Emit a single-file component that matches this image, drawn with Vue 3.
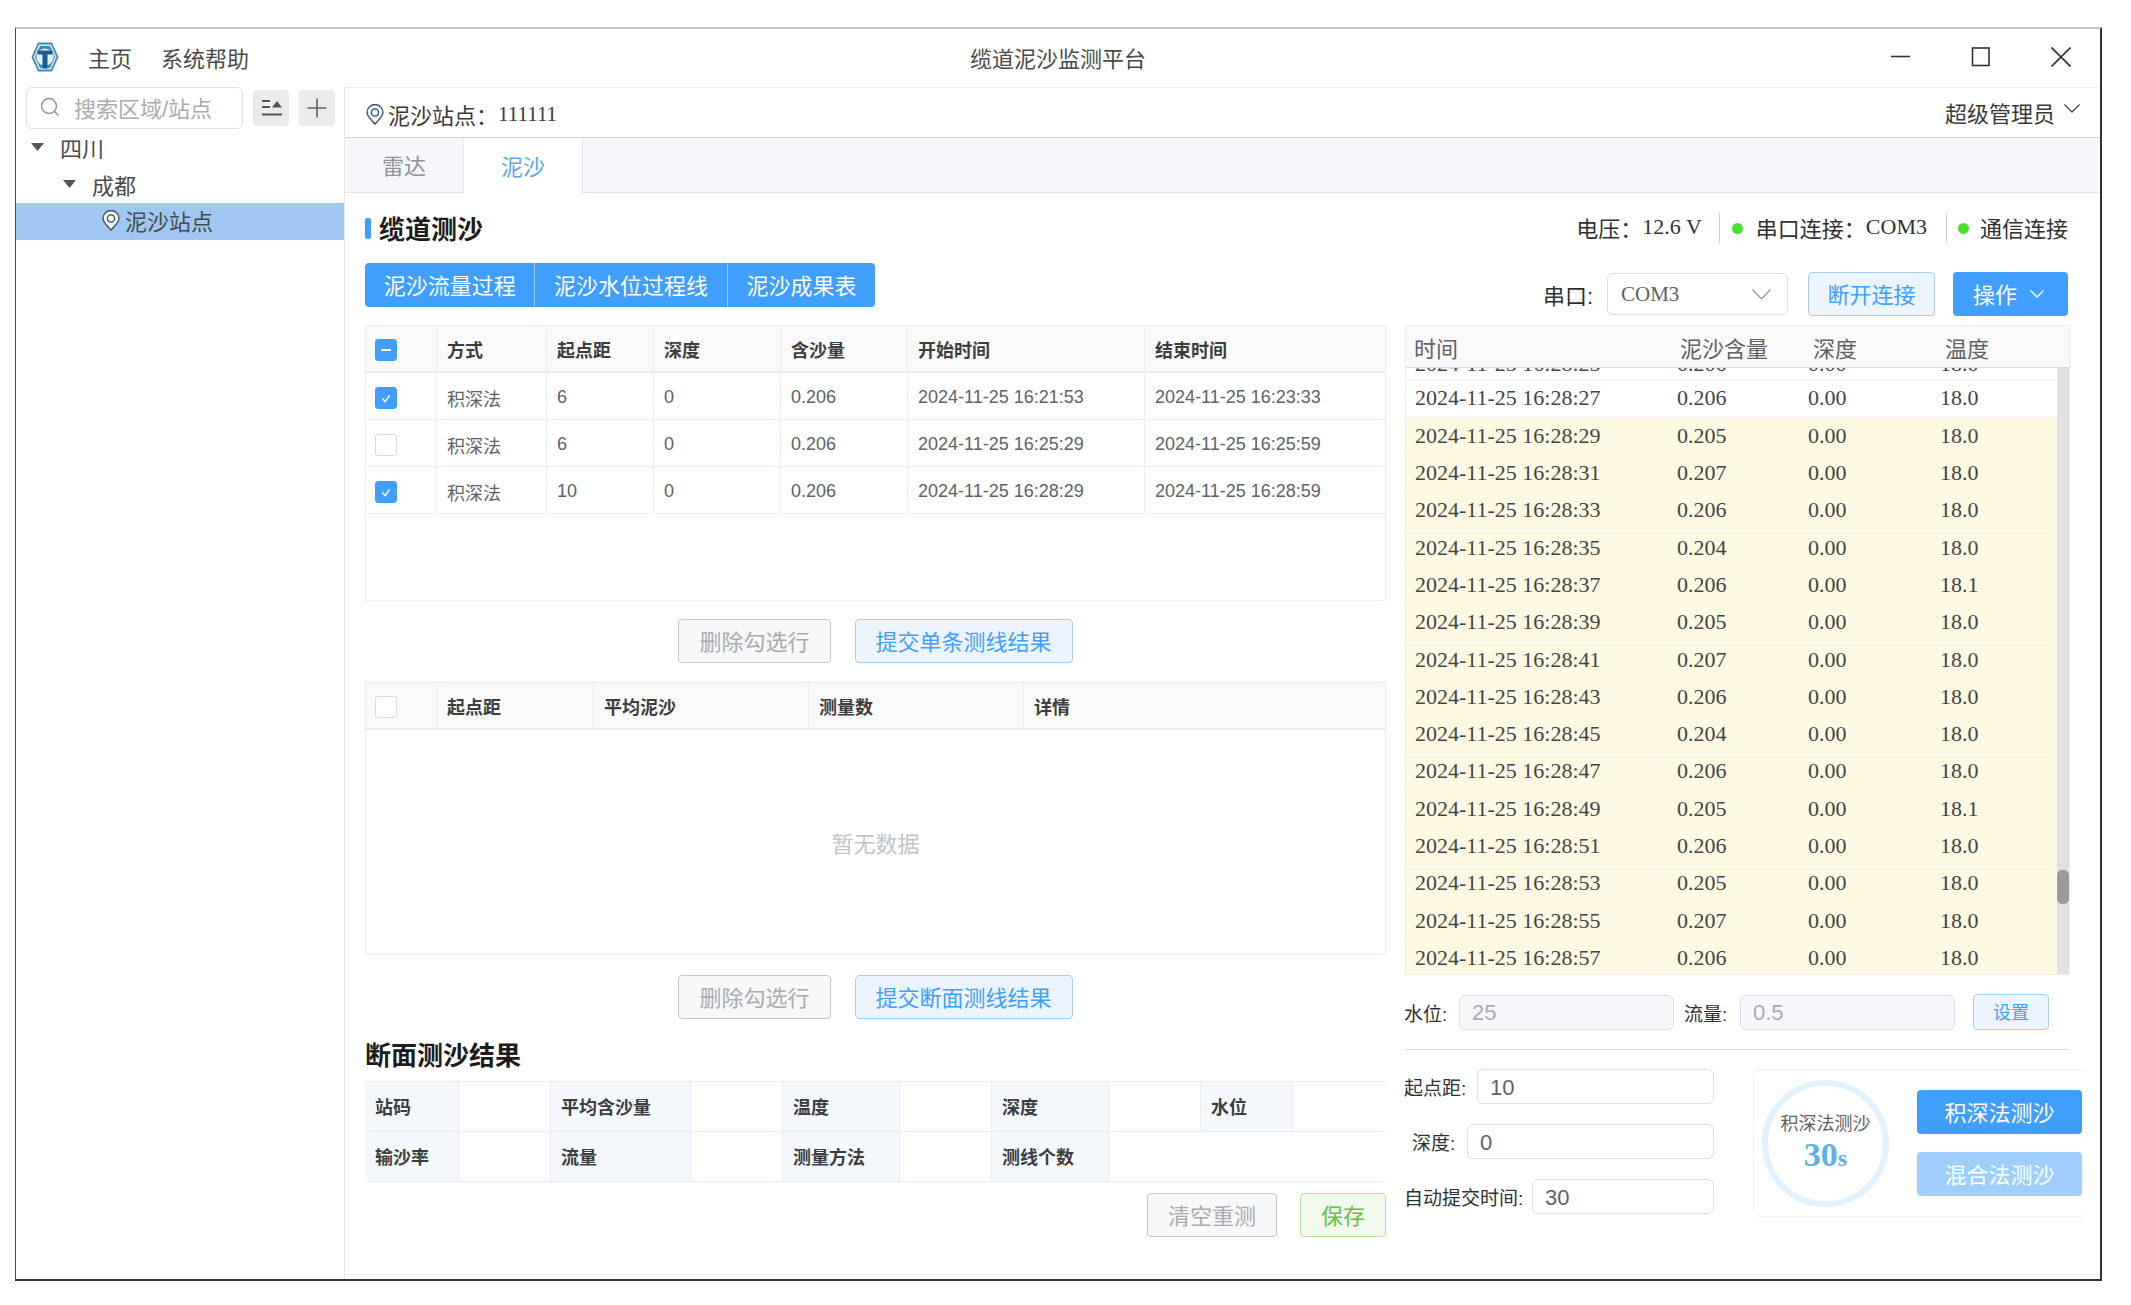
<template>
  <div class="page">
    <div class="window">
      <!-- 标题栏 -->
      <header class="titlebar">
        <div class="title-left">
          <svg class="logo" viewBox="0 0 28 30">
            <polygon points="7,0.5 21,0.5 27.5,15 21,29.5 7,29.5 0.5,15" fill="#3f8db3" />
            <polygon points="8,2.5 20,2.5 25.5,15 20,27.5 8,27.5 2.5,15" fill="#d5e8f0" />
            <polygon points="9,4 19,4 24,15 19,26 9,26 4,15" fill="#3f8db3" />
            <circle cx="14" cy="15" r="8.6" fill="#e6f1f6" />
            <path d="M6.5 8.5h15v4h-5v14h-5v-14h-5z" fill="#1c5c8e" />
          </svg>
          <span class="menu">主页</span>
          <span class="menu">系统帮助</span>
        </div>
        <div class="title-center">缆道泥沙监测平台</div>
        <div class="title-right">
          <svg viewBox="0 0 20 20" class="win-btn"><path d="M0 9.5h19" /></svg>
          <svg viewBox="0 0 20 20" class="win-btn"><rect x="1.5" y="1" width="16.5" height="17.5" /></svg>
          <svg viewBox="0 0 20 20" class="win-btn"><path d="M0.5 0.5l19 19M19.5 0.5l-19 19" /></svg>
        </div>
      </header>

      <div class="body">
        <!-- 左侧树 -->
        <aside class="sidebar">
          <div class="search-row">
            <div class="search">
              <svg viewBox="0 0 20 20" class="search-icon">
                <circle cx="9" cy="9" r="7.5" />
                <path d="M14.5 14.5l4 4" />
              </svg>
              <span>搜索区域/站点</span>
            </div>
            <button class="icon-btn">
              <svg viewBox="0 0 36 36" width="36" height="36">
                <path d="M9 11h8M9 17h8M9 24.5h20" stroke="#555" stroke-width="2" />
                <polygon points="19,17.5 29,17.5 24,11" fill="#555" />
              </svg>
            </button>
            <button class="icon-btn">
              <svg viewBox="0 0 36 36" width="36" height="36">
                <path d="M18 8.5v19M8.5 18h19" stroke="#606266" stroke-width="1.6" />
              </svg>
            </button>
          </div>
          <div class="tree">
            <div class="tree-row">
              <svg class="caret" viewBox="0 0 13 8"><polygon points="0,0 13,0 6.5,8" /></svg>
              <span>四川</span>
            </div>
            <div class="tree-row level2">
              <svg class="caret" viewBox="0 0 13 8"><polygon points="0,0 13,0 6.5,8" /></svg>
              <span>成都</span>
            </div>
            <div class="tree-row level3 selected">
              <svg class="pin" viewBox="0 0 18 21">
                <path d="M9 20C4.5 15.500 1 11.800 1 8.500a8 8 0 0 1 16 0c0 3.300-3.500 7-8 11.500z" />
                <circle cx="9" cy="8.500" r="3.600" />
              </svg>
              <span>泥沙站点</span>
            </div>
          </div>
        </aside>

        <main class="main">
          <div class="main-header">
            <div class="station">
              <svg class="pin" viewBox="0 0 18 21">
                <path d="M9 20C4.5 15.500 1 11.800 1 8.500a8 8 0 0 1 16 0c0 3.300-3.500 7-8 11.500z" />
                <circle cx="9" cy="8.500" r="3.600" />
              </svg>
              <span>泥沙站点：</span><span class="serif station-no">111111</span>
            </div>
            <div class="user">
              <span>超级管理员</span>
              <svg class="chev" viewBox="0 0 16 9"><path d="M0.500 0.500L8 8l7.500-7.500" /></svg>
            </div>
          </div>

          <div class="tabs">
            <div class="tab">雷达</div>
            <div class="tab active">泥沙</div>
          </div>

          <div class="content">
            <div class="head-row">
              <h2 class="section-title"><i class="title-bar"></i>缆道测沙</h2>
              <div class="status">
                <span>电压：</span><span class="serif">12.6 V</span>
                <i class="sep first-sep"></i>
                <i class="dot"></i>
                <span>串口连接：</span><span class="serif">COM3</span>
                <i class="sep"></i>
                <i class="dot last-dot"></i>
                <span>通信连接</span>
              </div>
            </div>

            <div class="toolbar">
              <div class="btn-group">
                <button v-for="b in groupBtns" :key="b">{{ b }}</button>
              </div>
              <div class="serial">
                <span class="serial-label">串口:</span>
                <div class="select">
                  <span class="serif">COM3</span>
                  <svg class="select-chev" viewBox="0 0 19 11"><path d="M0.500 0.500L9.500 10l9-9.500" /></svg>
                </div>
                <button class="btn light">断开连接</button>
                <button class="btn primary op-btn">
                  操作
                  <svg viewBox="0 0 14 8"><path d="M0.500 0.500L7 7l6.500-6.500" /></svg>
                </button>
              </div>
            </div>

            <div class="columns">
              <section class="col-left">
                <div class="table-box first-table">
                  <table>
                    <colgroup>
                      <col class="c-check" /><col class="c-a" /><col class="c-b" />
                      <col class="c-c" /><col class="c-c" /><col class="c-d" /><col />
                    </colgroup>
                    <thead>
                      <tr>
                        <th><span class="check on"><i class="dash"></i></span></th>
                        <th>方式</th><th>起点距</th><th>深度</th><th>含沙量</th><th>开始时间</th><th>结束时间</th>
                      </tr>
                    </thead>
                    <tbody>
                      <tr v-for="r in lines" :key="r.start">
                        <td>
                          <span class="check" :class="{ on: r.checked }">
                            <svg v-if="r.checked" viewBox="0 0 22 22"><path d="M7 11.500l3 3.500 5-7" /></svg>
                          </span>
                        </td>
                        <td>积深法</td>
                        <td>{{ r.dist }}</td>
                        <td>0</td>
                        <td>0.206</td>
                        <td>{{ r.start }}</td>
                        <td>{{ r.end }}</td>
                      </tr>
                    </tbody>
                  </table>
                </div>

                <div class="actions">
                  <button class="btn plain">删除勾选行</button>
                  <button class="btn light">提交单条测线结果</button>
                </div>

                <div class="table-box second-table">
                  <table>
                    <colgroup>
                      <col class="c-check" /><col class="c-e" /><col class="c-f" /><col class="c-f" /><col />
                    </colgroup>
                    <thead>
                      <tr>
                        <th><span class="check"></span></th>
                        <th>起点距</th><th>平均泥沙</th><th>测量数</th><th>详情</th>
                      </tr>
                    </thead>
                  </table>
                  <div class="empty">暂无数据</div>
                </div>

                <div class="actions second-actions">
                  <button class="btn plain">删除勾选行</button>
                  <button class="btn light">提交断面测线结果</button>
                </div>

                <h3 class="result-title">断面测沙结果</h3>
                <div class="desc">
                  <span class="lb w1">站码</span><span class="w2"></span>
                  <span class="lb w3">平均含沙量</span><span class="w4"></span>
                  <span class="lb w5">温度</span><span class="w6"></span>
                  <span class="lb w5">深度</span><span class="w6"></span>
                  <span class="lb w7">水位</span><span class="w8"></span>
                  <span class="lb w1">输沙率</span><span class="w2"></span>
                  <span class="lb w3">流量</span><span class="w4"></span>
                  <span class="lb w5">测量方法</span><span class="w6"></span>
                  <span class="lb w5">测线个数</span><span class="w9"></span>
                </div>
                <div class="result-actions">
                  <button class="btn plain">清空重测</button>
                  <button class="btn green">保存</button>
                </div>
              </section>

              <section class="col-right">
                <div class="live">
                  <div class="live-head">
                    <span>时间</span><span>泥沙含量</span><span>深度</span><span>温度</span>
                  </div>
                  <div class="live-body">
                    <div class="live-rows">
                      <div
                        v-for="(r, i) in samples"
                        :key="r.t"
                        class="live-row"
                        :class="{ warn: i > 1, cut: i === 0 }"
                      >
                        <span>2024-11-25 16:28:{{ r.t }}</span>
                        <span>{{ r.v }}</span>
                        <span>0.00</span>
                        <span>{{ r.temp }}</span>
                      </div>
                    </div>
                    <div class="scroll-track">
                      <div class="scroll-thumb"></div>
                    </div>
                  </div>
                </div>

                <div class="water-row">
                  <label class="f-label">水位:</label>
                  <input class="input" value="25" disabled />
                  <label class="f-label">流量:</label>
                  <input class="input" value="0.5" disabled />
                  <button class="btn light small">设置</button>
                </div>

                <div class="divider"></div>

                <div class="measure">
                  <div class="form">
                    <div class="form-row">
                      <label class="l1">起点距:</label>
                      <input class="input" value="10" />
                    </div>
                    <div class="form-row">
                      <label class="l2">深度:</label>
                      <input class="input" value="0" />
                    </div>
                    <div class="form-row">
                      <label class="l3">自动提交时间:</label>
                      <input class="input" value="30" />
                    </div>
                  </div>
                  <div class="timer-card">
                    <div class="ring">
                      <span class="ring-name">积深法测沙</span>
                      <span class="ring-num serif">30<small>s</small></span>
                    </div>
                    <div class="timer-btns">
                      <button class="btn primary wide">积深法测沙</button>
                      <button class="btn primary wide off">混合法测沙</button>
                    </div>
                  </div>
                </div>
              </section>
            </div>
          </div>
        </main>
      </div>
    </div>
  </div>
</template>

<script setup>
const groupBtns = ['泥沙流量过程', '泥沙水位过程线', '泥沙成果表']

const lines = [
  { dist: 6, start: '2024-11-25 16:21:53', end: '2024-11-25 16:23:33', checked: true },
  { dist: 6, start: '2024-11-25 16:25:29', end: '2024-11-25 16:25:59', checked: false },
  { dist: 10, start: '2024-11-25 16:28:29', end: '2024-11-25 16:28:59', checked: true }
]

// 第一行是滚动时露出一半的行
const samples = [
  { t: '25', v: '0.206', temp: '18.0' },
  { t: '27', v: '0.206', temp: '18.0' },
  { t: '29', v: '0.205', temp: '18.0' },
  { t: '31', v: '0.207', temp: '18.0' },
  { t: '33', v: '0.206', temp: '18.0' },
  { t: '35', v: '0.204', temp: '18.0' },
  { t: '37', v: '0.206', temp: '18.1' },
  { t: '39', v: '0.205', temp: '18.0' },
  { t: '41', v: '0.207', temp: '18.0' },
  { t: '43', v: '0.206', temp: '18.0' },
  { t: '45', v: '0.204', temp: '18.0' },
  { t: '47', v: '0.206', temp: '18.0' },
  { t: '49', v: '0.205', temp: '18.1' },
  { t: '51', v: '0.206', temp: '18.0' },
  { t: '53', v: '0.205', temp: '18.0' },
  { t: '55', v: '0.207', temp: '18.0' },
  { t: '57', v: '0.206', temp: '18.0' }
]
</script>

<style>
html,
body {
  margin: 0;
  background: #fff;
}
</style>

<style scoped>
.page {
  width: 2131px;
  height: 1305px;
  padding: 27px 0 0 15px;
  box-sizing: border-box;
  overflow: hidden;
  background: #fff;
  font-family: 'Liberation Sans', 'Noto Sans CJK SC', sans-serif;
  color: #303133;
}

.serif {
  font-family: 'Liberation Serif', 'Noto Sans CJK SC', serif;
}

.window {
  width: 2087px;
  height: 1254px;
  box-sizing: border-box;
  display: flex;
  flex-direction: column;
  border: 2px solid #333;
  border-left-width: 1px;
  border-left-color: #4a4a4a;
  border-top-color: #c6c6c0;
}

/* 标题栏 */
.titlebar {
  height: 58px;
  flex-shrink: 0;
  box-sizing: border-box;
  padding-bottom: 3px;
  display: grid;
  grid-template-columns: 1fr auto 1fr;
  align-items: center;
  font-size: 22px;
  color: #4a4a4a;
}

.title-left {
  display: flex;
  align-items: center;
  padding-left: 15px;
}

.logo {
  width: 28px;
  height: 30px;
}

.menu {
  margin-left: 29px;
}

.title-right {
  display: flex;
  justify-content: flex-end;
  gap: 60px;
  padding-right: 29px;
}

.win-btn {
  width: 20px;
  height: 20px;
  fill: none;
  stroke: #333;
  stroke-width: 1.6;
}

.body {
  flex: 1;
  display: flex;
  min-height: 0;
}

/* 左侧 */
.sidebar {
  width: 329px;
  flex-shrink: 0;
  box-sizing: border-box;
  border-right: 1px solid #e8e8e8;
}

.search-row {
  display: flex;
  align-items: center;
  gap: 10px;
  padding-left: 10px;
}

.search {
  width: 217px;
  height: 42px;
  box-sizing: border-box;
  display: flex;
  align-items: center;
  gap: 14px;
  padding: 0 0 2px 13px;
  border: 1px solid #dcdfe6;
  border-radius: 6px;
  font-size: 22px;
  color: #a8abb2;
  white-space: nowrap;
}

.search-icon {
  width: 20px;
  height: 20px;
  flex-shrink: 0;
  fill: none;
  stroke: #8e9197;
  stroke-width: 1.4;
}

.icon-btn {
  width: 36px;
  height: 36px;
  padding: 0;
  border: none;
  border-radius: 4px;
  background: #ebebeb;
}

.icon-btn svg {
  display: block;
}

.tree {
  margin-top: 1px;
  font-size: 22px;
  color: #4a4a4a;
}

.tree-row {
  height: 36.5px;
  box-sizing: border-box;
  display: flex;
  align-items: center;
  padding: 0 0 2px 15px;
}

.tree-row.level2 {
  padding-left: 47px;
}

.tree-row.level3 {
  padding-left: 86px;
  gap: 5px;
}

.tree-row.selected {
  background: #9fc7f2;
}

.caret {
  width: 13px;
  height: 8px;
  margin-right: 16px;
  fill: #555;
}

.pin {
  width: 18px;
  height: 21px;
  flex-shrink: 0;
  fill: #eaf4fb;
  stroke: #3d4a55;
  stroke-width: 1.3;
}

/* 右侧主体 */
.main {
  flex: 1;
  min-width: 0;
  display: flex;
  flex-direction: column;
  margin-bottom: 4px;
  border-bottom: 1px solid #eceef1;
}

.main-header {
  height: 51px;
  flex-shrink: 0;
  box-sizing: border-box;
  display: flex;
  align-items: center;
  justify-content: space-between;
  padding: 0 20px 0 21px;
  border-top: 1px solid #eeeeea;
  border-bottom: 1px solid #d2d4d8;
  font-size: 22px;
  color: #3a3a3a;
}

.station {
  display: flex;
  align-items: center;
  gap: 4px;
  margin-top: 3px;
}

.station-no {
  font-size: 21px;
  margin-left: -4px;
}

.user {
  display: flex;
  align-items: center;
  gap: 9px;
  padding-bottom: 2px;
}

.chev {
  width: 16px;
  height: 9px;
  margin-top: -6px;
  fill: none;
  stroke: #444;
  stroke-width: 1.3;
}

.tabs {
  height: 55px;
  flex-shrink: 0;
  box-sizing: border-box;
  display: flex;
  background: #f5f7fa;
  border-bottom: 1px solid #e4e7ed;
  font-size: 22px;
}

.tab {
  width: 118px;
  height: 54px;
  box-sizing: border-box;
  padding-bottom: 2px;
  display: flex;
  align-items: center;
  justify-content: center;
  color: #909399;
}

.tab.active {
  width: 120px;
  height: 55px;
  background: #fff;
  border-left: 1px solid #e4e7ed;
  border-right: 1px solid #e4e7ed;
  color: #5aa5ee;
}

.content {
  flex: 1;
  min-height: 0;
  padding: 16px 30px 0 20px;
}

.head-row {
  height: 36px;
  display: flex;
  align-items: center;
  justify-content: space-between;
}

.section-title {
  margin: 0;
  display: flex;
  align-items: center;
  gap: 8px;
  font-size: 26px;
  font-weight: 700;
  color: #1c1c1c;
}

.title-bar {
  width: 6px;
  height: 21px;
  margin-top: 3px;
  border-radius: 2px;
  background: #409eff;
}

.status {
  display: flex;
  align-items: center;
  margin-right: 2px;
  font-size: 22px;
  color: #303133;
  white-space: nowrap;
}

.sep {
  width: 1px;
  height: 30px;
  margin: 2px 11px 0 19px;
  background: #ccc;
}

.sep.first-sep {
  margin: 2px 12px 0 17px;
}

.dot {
  width: 11px;
  height: 11px;
  margin: 2px 13px 0 0;
  border-radius: 50%;
  background: #4de032;
}

.last-dot {
  margin-right: 11px;
}

.toolbar {
  height: 53px;
  margin-top: 18px;
  display: flex;
  justify-content: space-between;
}

.btn-group {
  height: 44px;
  display: flex;
  border-radius: 4px;
  overflow: hidden;
}

.btn-group button {
  padding: 0 18.7px 3px;
  border: none;
  border-right: 1px solid #9ccbff;
  background: #409eff;
  color: #fff;
  font-family: inherit;
  font-size: 22px;
  white-space: nowrap;
}

.btn-group button:last-child {
  border-right: none;
}

.serial {
  align-self: flex-end;
  display: flex;
  align-items: center;
  margin-right: 2px;
  font-size: 22px;
}

.serial-label {
  margin-right: 14px;
}

.select {
  width: 181px;
  height: 42px;
  box-sizing: border-box;
  display: flex;
  align-items: center;
  justify-content: space-between;
  padding: 0 16px 0 13px;
  border: 1px solid #dcdfe6;
  border-radius: 6px;
  color: #606266;
  font-size: 21px;
}

.select-chev {
  width: 19px;
  height: 11px;
  fill: none;
  stroke: #8e9197;
  stroke-width: 1.2;
}

.btn {
  height: 44px;
  padding: 0 20px 3px;
  box-sizing: border-box;
  border: 1px solid transparent;
  border-radius: 4px;
  font-family: inherit;
  font-size: 22px;
  white-space: nowrap;
}

.btn.light {
  background: #ecf5ff;
  border-color: #a9cdf0;
  color: #409eff;
}

.btn.plain {
  background: #f8f8f8;
  border-color: #c4c6ca;
  color: #a8abb2;
}

.btn.green {
  background: #f0f9eb;
  border-color: #b3e19d;
  color: #67c23a;
}

.btn.primary {
  background: #409eff;
  color: #fff;
}

.btn.primary.off {
  background: #a0cfff;
}

.serial .btn.light {
  width: 127px;
  padding: 0 0 3px;
  margin-left: 20px;
}

.op-btn {
  width: 115px;
  margin-left: 18px;
  padding: 0 0 3px 19px;
  display: flex;
  align-items: center;
  gap: 13px;
}

.op-btn svg {
  width: 14px;
  height: 8px;
  margin-top: 3px;
  fill: none;
  stroke: #fff;
  stroke-width: 1.4;
}

.columns {
  margin-top: 9px;
  display: flex;
  gap: 19px;
}

.col-left {
  width: 1021px;
  flex-shrink: 0;
}

.col-right {
  width: 665px;
  flex-shrink: 0;
}

/* 表格 */
.table-box {
  box-sizing: border-box;
  border: 1px solid #ebeef5;
}

.first-table {
  height: 276px;
}

.second-table {
  height: 273px;
  margin-top: 19px;
}

table {
  width: 100%;
  table-layout: fixed;
  border-collapse: separate;
  border-spacing: 0;
  font-size: 18px;
}

.c-check {
  width: 71px;
}

.c-a {
  width: 110px;
}

.c-b {
  width: 107px;
}

.c-c {
  width: 127px;
}

.c-d {
  width: 237px;
}

.c-e {
  width: 157px;
}

.c-f {
  width: 215px;
}

th,
td {
  height: 47px;
  box-sizing: border-box;
  padding: 0 0 0 10px;
  text-align: left;
  border-bottom: 1px solid #ebeef5;
  border-right: 1px solid #ebeef5;
  white-space: nowrap;
}

th:first-child,
td:first-child {
  padding-left: 9px;
}

th:first-child {
  padding-top: 2px;
}

td {
  padding-top: 3px;
  color: #606266;
}

th:last-child,
td:last-child {
  border-right: none;
}

th {
  background: #fafafa;
  border-bottom: 2px solid #ececec;
  font-weight: 700;
  color: #3c3d40;
}

.check {
  width: 22px;
  height: 22px;
  box-sizing: border-box;
  display: block;
  border: 1px solid #d8dadf;
  border-radius: 3px;
  background: #fff;
}

.check.on {
  border-color: #409eff;
  background: #409eff;
}

.check svg {
  display: block;
  width: 20px;
  height: 20px;
  fill: none;
  stroke: #fff;
  stroke-width: 1.6;
}

.dash {
  display: block;
  width: 10px;
  height: 2px;
  margin: 9px auto 0;
  background: #fff;
}

.actions {
  margin-top: 18px;
  display: flex;
  justify-content: center;
  gap: 24px;
}

.second-actions {
  margin-top: 20px;
}

.empty {
  height: 224px;
  display: flex;
  align-items: center;
  justify-content: center;
  font-size: 22px;
  color: #c0c4cc;
}

.result-title {
  height: 36px;
  margin: 19px 0 0;
  line-height: 36px;
  font-size: 26px;
  font-weight: 700;
  color: #1c1c1c;
}

.desc {
  margin-top: 7px;
  display: flex;
  flex-wrap: wrap;
  box-sizing: border-box;
  border-top: 1px solid #ebeef5;
}

.desc span {
  height: 50px;
  box-sizing: border-box;
  border-right: 1px solid #ebeef5;
  border-bottom: 1px solid #ebeef5;
}

.desc .lb {
  display: flex;
  align-items: center;
  padding: 0 0 2px 10px;
  background: #f5f8fd;
  font-size: 18px;
  font-weight: 700;
  color: #3c3d40;
  white-space: nowrap;
}

.desc .w1 {
  width: 94px;
}

.desc .w2 {
  width: 92px;
}

.desc .w3 {
  width: 140px;
}

.desc .w4 {
  width: 92px;
}

.desc .w5 {
  width: 117px;
}

.desc .w6 {
  width: 92px;
}

.desc .w7 {
  width: 92px;
}

.desc .w8 {
  width: 93px;
  border-right: none;
}

.desc .w9 {
  width: 277px;
  border-right: none;
}

.result-actions {
  margin-top: 11px;
  display: flex;
  justify-content: flex-end;
  gap: 23px;
}

/* 实时数据 */
.live {
  height: 650px;
  box-sizing: border-box;
  border: 1px solid #ebeef5;
  display: flex;
  flex-direction: column;
}

.live-head {
  height: 42px;
  flex-shrink: 0;
  box-sizing: border-box;
  display: grid;
  grid-template-columns: 266px 133px 132px 1fr;
  align-items: center;
  padding-left: 8px;
  background: #fafafa;
  border-bottom: 1px solid #d8dadf;
  font-size: 22px;
  color: #606266;
}

.live-body {
  flex: 1;
  min-height: 0;
  display: flex;
}

.live-rows {
  flex: 1;
  min-width: 0;
  overflow: hidden;
}

.live-row {
  height: 37.3px;
  box-sizing: border-box;
  display: grid;
  grid-template-columns: 262px 131px 132px 1fr;
  align-items: center;
  padding-left: 9px;
  border-bottom: 1px solid #f2f2ee;
  font-family: 'Liberation Serif', serif;
  font-size: 22px;
  color: #444;
}

.live-row.cut {
  margin-top: -25px;
  padding-top: 6px;
}

.live-row.warn {
  background: #fef9e1;
}

.scroll-track {
  width: 12px;
  flex-shrink: 0;
  padding-top: 502px;
  box-sizing: border-box;
  background: #e0e0e0;
}

.scroll-thumb {
  height: 34px;
  border-radius: 5px;
  background: #9a9a9a;
}

/* 表单 */
.input {
  height: 35px;
  min-width: 0;
  box-sizing: border-box;
  padding: 2px 12px 0;
  border: 1px solid #dcdfe6;
  border-radius: 6px;
  background: #fff;
  font-family: inherit;
  font-size: 22px;
  color: #606266;
  outline: none;
}

.input:disabled {
  background: #f5f7fa;
  color: #a8abb2;
}

.water-row {
  height: 36px;
  margin: 19px 0 0 -1px;
  display: flex;
  align-items: center;
  font-size: 19px;
}

.water-row .input {
  width: 215px;
}

.f-label {
  width: 44px;
  margin-right: 11px;
  white-space: nowrap;
}

.water-row .input + .f-label {
  margin-left: 10px;
}

.water-row .f-label + .input + .f-label + .input {
  margin-left: 1px;
}

.btn.small {
  height: 36px;
  margin-left: 18px;
  padding: 0 19px 2px;
  font-size: 18px;
}

.divider {
  height: 1px;
  margin: 19px 2px 0 0;
  background: #d6d8dc;
}

.measure {
  margin-top: 19px;
  display: flex;
  gap: 39px;
  margin-right: -18px;
}

.form {
  width: 310px;
  margin-left: -1px;
  flex-shrink: 0;
  display: flex;
  flex-direction: column;
  gap: 20px;
}

.form-row {
  display: flex;
  align-items: center;
  font-size: 19px;
  color: #303133;
  white-space: nowrap;
}

.form-row .input {
  flex: 1;
}

.l1 {
  width: 73px;
}

.l2 {
  width: 55px;
  margin-left: 8px;
}

.l3 {
  width: 128px;
}

.timer-card {
  flex: 1;
  height: 148px;
  box-sizing: border-box;
  display: flex;
  align-items: center;
  gap: 28px;
  padding-left: 8px;
  border: 1px solid #f1f1f1;
  border-right-color: transparent;
  border-radius: 8px;
}

.ring {
  width: 127px;
  height: 127px;
  flex-shrink: 0;
  box-sizing: border-box;
  display: flex;
  flex-direction: column;
  align-items: center;
  justify-content: center;
  border: 6px solid #e1f1fd;
  border-radius: 50%;
}

.ring-name {
  font-size: 18px;
  color: #606266;
  white-space: nowrap;
}

.ring-num {
  margin-top: 1px;
  font-size: 34px;
  line-height: 38px;
  font-weight: 700;
  color: #5ab2e8;
}

.ring-num small {
  font-size: 24px;
}

.timer-btns {
  display: flex;
  flex-direction: column;
  gap: 18px;
}

.btn.wide {
  width: 165px;
  padding: 0 0 3px;
}
</style>
